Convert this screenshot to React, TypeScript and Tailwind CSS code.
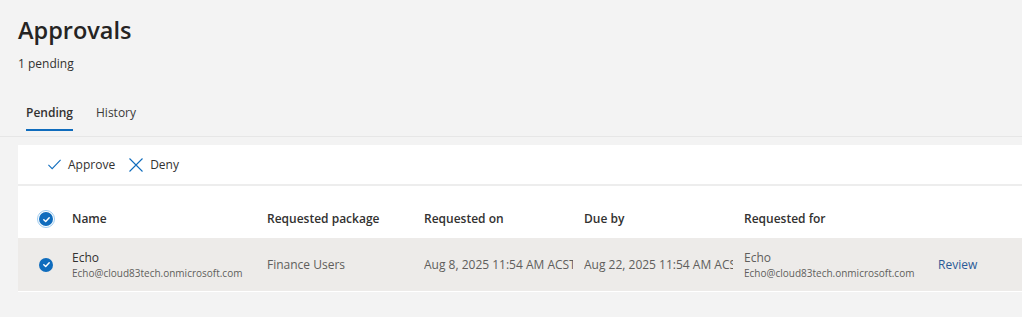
import React from "react";

const font = { fontFamily: '"Open Sans", "Noto Sans", sans-serif' };

function CheckCircle({ ring = false }: { ring?: boolean }) {
  return (
    <div className={ring ? "w-[18px] h-[18px] rounded-full border border-[#9ccbf0] flex items-center justify-center" : "w-[18px] h-[18px] flex items-center justify-center"}>
      <div className="w-[14px] h-[14px] rounded-full bg-[#0f6cbd] flex items-center justify-center">
        <svg width="9" height="9" viewBox="0 0 10 10" fill="none">
          <path d="M2 5.2 L4.1 7.2 L8 3" stroke="white" strokeWidth="1.6" strokeLinecap="round" strokeLinejoin="round" />
        </svg>
      </div>
    </div>
  );
}

export default function App() {
  return (
    <div className="w-[1022px] h-[317px] bg-[#f3f3f3] overflow-hidden text-[#323130]" style={font}>
      <div className="pl-[18px] pt-[14px]">
        <h1 className="text-[23.5px] font-semibold leading-[32px] text-[#252423]">Approvals</h1>
        <div className="mt-[10px] text-[12px] leading-[16px] text-[#323130]">1 pending</div>
      </div>
      <div className="mt-[27px] pl-[18px] flex border-b border-[#e6e6e6]">
        <div className="px-[8px] flex flex-col items-center">
          <div className="h-[28px] flex items-center text-[12px] font-semibold">Pending</div>
          <div className="h-[2px] w-full bg-[#0f6cbd] mt-[2px]"></div>
        </div>
        <div className="px-[15px]">
          <div className="h-[28px] flex items-center text-[12px] text-[#3b3a39]">History</div>
        </div>
        <div className="h-[37px]"></div>
      </div>
      <div className="mt-[8px] ml-[18px] bg-white">
        <div className="h-[41px] flex items-center pl-[29px] text-[12px] border-b-2 border-[#ededed]">
          <div className="flex items-center gap-[6px]">
            <svg width="15" height="15" viewBox="0 0 16 16" fill="none">
              <path d="M1.5 8.5 L5.5 12.5 L14.5 3" stroke="#0f6cbd" strokeWidth="1.1" />
            </svg>
            <span>Approve</span>
          </div>
          <div className="flex items-center gap-[6px] ml-[13px]">
            <svg width="16" height="16" viewBox="0 0 16 16" fill="none">
              <path d="M1.5 1.5 L14.5 14.5 M14.5 1.5 L1.5 14.5" stroke="#0f6cbd" strokeWidth="1.1" />
            </svg>
            <span>Deny</span>
          </div>
        </div>
        <div className="h-[14px]"></div>
        <div className="h-[38px] flex items-center text-[12px] font-semibold">
          <div className="w-[54px] flex justify-center pl-[2px]"><CheckCircle ring /></div>
          <div className="w-[195px]">Name</div>
          <div className="w-[157px]">Requested package</div>
          <div className="w-[160px]">Requested on</div>
          <div className="w-[160px]">Due by</div>
          <div className="w-[194px]">Requested for</div>
        </div>
        <div className="h-[54px] flex items-center bg-[#edebe9] text-[12px] border-b border-white">
          <div className="w-[54px] flex justify-center pl-[2px]"><CheckCircle /></div>
          <div className="w-[195px] flex flex-col">
            <span className="leading-[17px] text-[#323130]">Echo</span>
            <span className="text-[10px] leading-[15px] text-[#605e5c]">Echo@cloud83tech.onmicrosoft.com</span>
          </div>
          <div className="w-[157px] text-[#605e5c]">Finance Users</div>
          <div className="w-[160px]">
            <div className="w-[149px] text-[#605e5c] whitespace-nowrap overflow-hidden">Aug 8, 2025 11:54 AM ACST</div>
          </div>
          <div className="w-[160px]">
            <div className="w-[149px] text-[#605e5c] whitespace-nowrap overflow-hidden">Aug 22, 2025 11:54 AM ACST</div>
          </div>
          <div className="w-[194px] flex flex-col">
            <span className="leading-[17px] text-[#605e5c]">Echo</span>
            <span className="text-[10px] leading-[15px] text-[#605e5c]">Echo@cloud83tech.onmicrosoft.com</span>
          </div>
          <div className="text-[#2a5a97]">Review</div>
        </div>
      </div>
    </div>
  );
}
